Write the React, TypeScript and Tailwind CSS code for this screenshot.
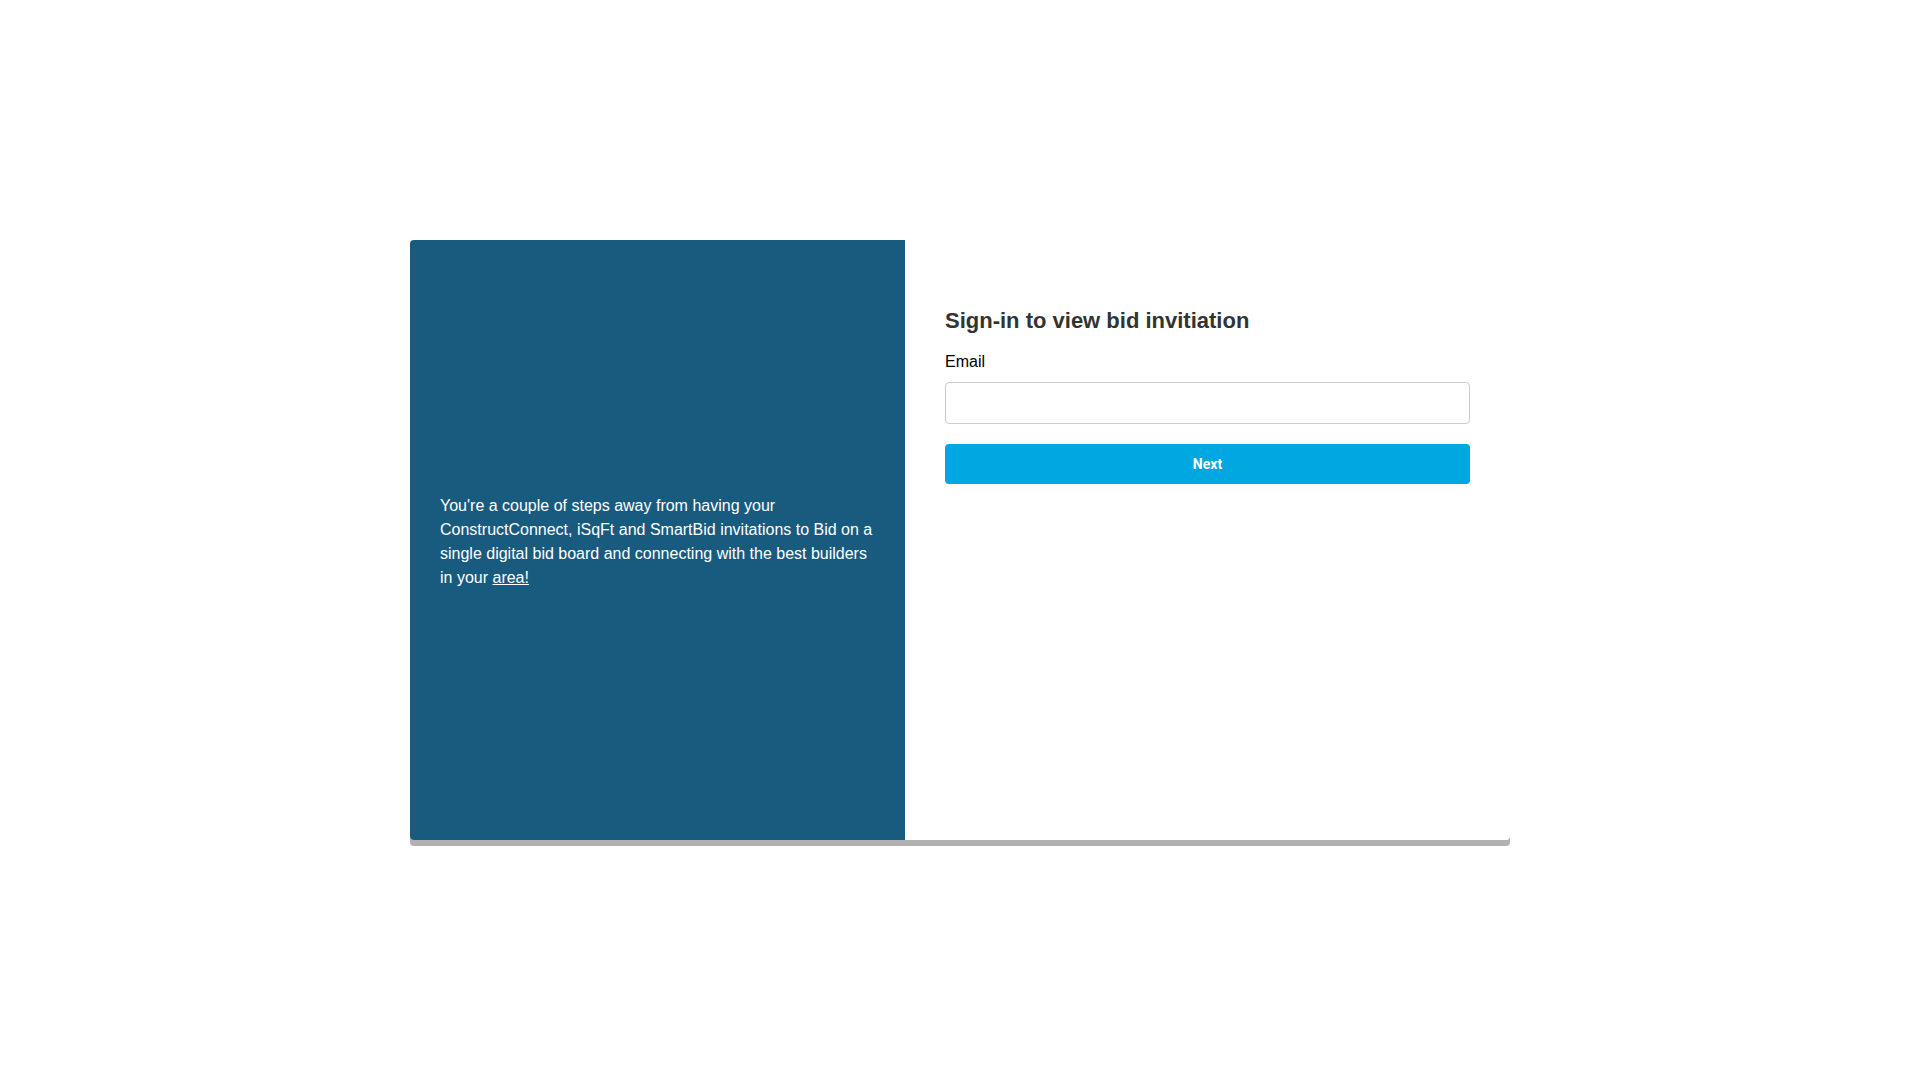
import { useState } from "react";

export default function SignIn() {
  const [email, setEmail] = useState("");

  return (
    <main className="flex min-h-screen items-center justify-center bg-white font-['Liberation_Sans',Arial,sans-serif] text-base text-black">
      <div className="flex min-h-[600px] w-full max-w-[1100px] overflow-hidden rounded bg-white shadow-[0_6px_0_#b1b1b1]">
        {/* Intro panel */}
        <section className="flex w-[45%] items-center bg-[#195b7e] px-[30px] pt-1 text-white">
          <p>
            You're a couple of steps away from having your ConstructConnect,
            iSqFt and SmartBid invitations to Bid on a single digital bid board
            and connecting with the best builders in your{" "}
            <a href="#area" className="underline">
              area!
            </a>
          </p>
        </section>

        {/* Sign-in form */}
        <form
          className="flex-1 px-10 pt-16"
          onSubmit={(e) => e.preventDefault()}
        >
          <h1 className="text-[22px] leading-[34px] font-bold text-[#333333]">
            Sign-in to view bid invitiation
          </h1>
          <label htmlFor="email" className="mt-3 block">
            Email
          </label>
          <input
            id="email"
            type="email"
            value={email}
            onChange={(e) => setEmail(e.target.value)}
            className="mt-2 block h-[42px] w-full rounded border border-[#cccccc] px-3 outline-none focus:border-[#00a7e1]"
          />
          <button
            type="submit"
            className="mt-5 block h-10 w-full rounded bg-[#00a7e1] font-['Roboto',sans-serif] text-sm font-bold text-white hover:bg-[#0095c9]"
          >
            Next
          </button>
        </form>
      </div>
    </main>
  );
}
